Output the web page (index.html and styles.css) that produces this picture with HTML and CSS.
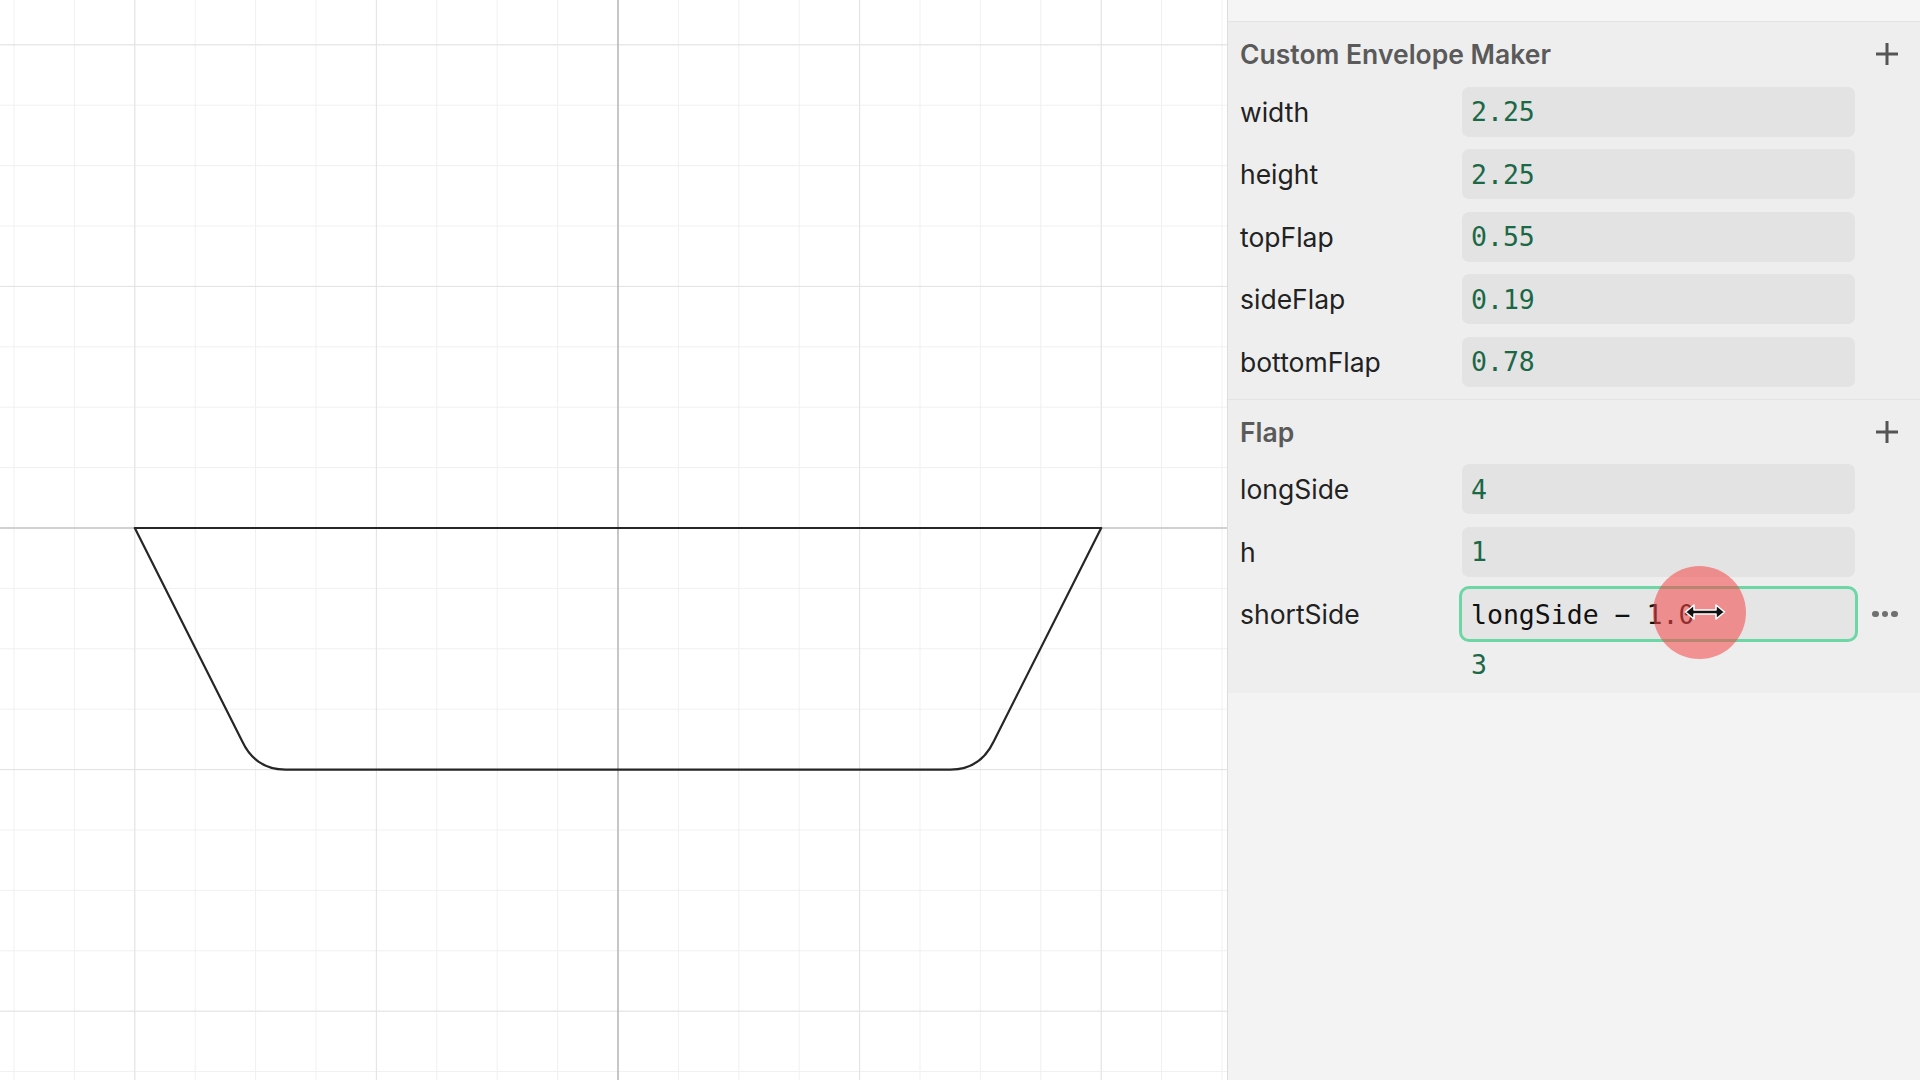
FILE: index.html
```html
<!DOCTYPE html>
<html lang="en">
<head>
    <meta charset="UTF-8">
    <meta name="viewport" content="width=device-width, initial-scale=1.0">
    <title>Custom Envelope Maker</title>
    <link rel="stylesheet" href="styles.css">
</head>
<body>

    <div class="app">
        <!-- drawing area: grid, axes and the flap outline -->
        <div class="canvas">
            <svg width="1227" height="1080" viewBox="0 0 1227 1080">
                <defs>
                    <pattern id="minor" x="13.5" y="44.3" width="60.4" height="60.4" patternUnits="userSpaceOnUse">
                        <rect width="1" height="60.4" fill="#f0f0f0"/>
                        <rect width="60.4" height="1" fill="#f0f0f0"/>
                    </pattern>
                    <pattern id="major" x="134.3" y="44.3" width="241.6" height="241.6" patternUnits="userSpaceOnUse">
                        <rect width="1" height="241.6" fill="#e3e3e3"/>
                        <rect width="241.6" height="1" fill="#e3e3e3"/>
                    </pattern>
                </defs>
                <rect width="1227" height="1080" fill="#fff"/>
                <rect width="1227" height="1080" fill="url(#minor)"/>
                <rect width="1227" height="1080" fill="url(#major)"/>
                <rect x="617.5" y="0" width="1" height="1080" fill="#9e9e9e"/>
                <rect x="0" y="527.5" width="1227" height="1" fill="#b4b4b4"/>
                <path d="M134.8 528 H1101.2 L993.8 741.2 Q980.4 769.6 950.4 769.6 H285.6 Q255.6 769.6 242.2 741.2 Z"
                      fill="none" stroke="#262626" stroke-width="2.2" stroke-linejoin="round"/>
            </svg>
        </div>

        <aside class="panel">
            <div class="panel-top"></div>

            <section class="params">
                <div class="params-head">
                    <h2>Custom Envelope Maker</h2>
                    <button class="add" type="button">
                        <svg width="24" height="24" viewBox="0 0 24 24"><path d="M12 1 V23 M1 12 H23" stroke="#555" stroke-width="3"/></svg>
                    </button>
                </div>
                <div class="param"><label>width</label><div class="value">2.25</div></div>
                <div class="param"><label>height</label><div class="value">2.25</div></div>
                <div class="param"><label>topFlap</label><div class="value">0.55</div></div>
                <div class="param"><label>sideFlap</label><div class="value">0.19</div></div>
                <div class="param"><label>bottomFlap</label><div class="value">0.78</div></div>
            </section>

            <section class="params last">
                <div class="params-head">
                    <h2>Flap</h2>
                    <button class="add" type="button">
                        <svg width="24" height="24" viewBox="0 0 24 24"><path d="M12 1 V23 M1 12 H23" stroke="#555" stroke-width="3"/></svg>
                    </button>
                </div>
                <div class="param"><label>longSide</label><div class="value">4</div></div>
                <div class="param"><label>h</label><div class="value">1</div></div>
                <div class="param">
                    <label>shortSide</label>
                    <div class="value editing">
                        <span class="expr">longSide − 1.0</span>
                        <span class="click"></span>
                        <svg class="cursor" width="42" height="18" viewBox="0 0 42 18">
                            <path d="M1.5 9 L10 2 V7 H32 V2 L40.5 9 L32 16 V11 H10 V16 Z" fill="#111" stroke="#fff" stroke-width="1.6" stroke-linejoin="round"/>
                        </svg>
                    </div>
                    <div class="more"><i></i><i></i><i></i></div>
                </div>
                <div class="result">3</div>
            </section>
        </aside>
    </div>

</body>
</html>
```

FILE: styles.css
```css
* {
    margin: 0;
    padding: 0;
    box-sizing: border-box;
}

body {
    font-family: Inter, "Noto Sans", sans-serif;
    width: 1920px;
    height: 1080px;
    overflow: hidden;
}

.app {
    display: flex;
    height: 1080px;
}

.canvas {
    flex: none;
    width: 1227px;
    background: #fff;
}

.canvas svg {
    display: block;
}

.panel {
    flex: 1;
    background: #f3f3f3;
    border-left: 1px solid #dcdcdc;
}

.panel-top {
    height: 22px;
    background: #f5f5f5;
    border-bottom: 1px solid #e3e3e3;
}

.params {
    display: flex;
    flex-direction: column;
    gap: 12.5px;
    padding: 12px 0 12px 12px;
    background: #eeeeee;
    border-bottom: 1px solid #e3e3e3;
}

.params.last {
    padding-bottom: 15px;
    border-bottom: none;
}

.params-head {
    display: flex;
    align-items: center;
    justify-content: space-between;
    height: 40px;
    padding-right: 21px;
}

.params-head h2 {
    font-size: 26.5px;
    font-weight: 600;
    color: #5a5a5a;
}

.add {
    display: flex;
    width: 24px;
    height: 24px;
    border: none;
    background: none;
}

.param {
    display: grid;
    grid-template-columns: 222px 393px 1fr;
    align-items: center;
    height: 50px;
}

.param label {
    font-size: 26.5px;
    color: #222;
}

.value {
    display: flex;
    align-items: center;
    height: 50px;
    padding-left: 9px;
    background: #e3e3e3;
    border-radius: 7px;
    font-family: "DejaVu Sans Mono", monospace;
    font-size: 26.5px;
    color: #1b6847;
}

.value.editing {
    position: relative;
    color: #111;
    background: #e5e5e5;
    outline: 3px solid #6cd6a4;
}

.expr {
    white-space: pre;
}

/* click marker over the field being dragged */
.click {
    position: absolute;
    left: 191px;
    top: -23px;
    width: 93px;
    height: 93px;
    border-radius: 50%;
    background: rgba(245, 70, 70, 0.55);
}

.cursor {
    position: absolute;
    left: 222px;
    top: 14px;
}

.more {
    display: flex;
    gap: 3px;
    margin-left: 17px;
}

.more i {
    width: 6.5px;
    height: 6.5px;
    border-radius: 50%;
    background: #707070;
}

.result {
    padding-left: 231px;
    font-family: "DejaVu Sans Mono", monospace;
    font-size: 26.5px;
    line-height: 26px;
    color: #1b6847;
}
```
